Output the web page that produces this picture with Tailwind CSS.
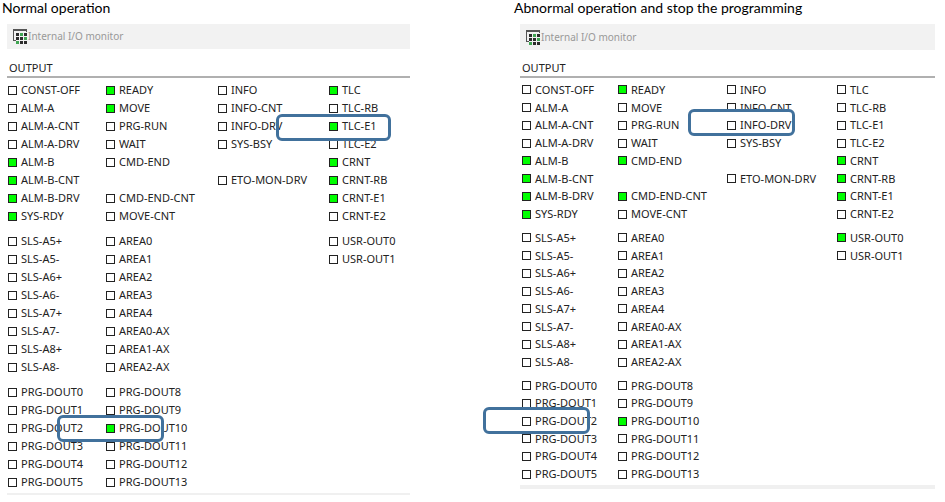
<!DOCTYPE html>
<html lang="en">
<head>
<meta charset="utf-8">
<title>Internal I/O monitor</title>
<script src="https://cdn.jsdelivr.net/npm/@tailwindcss/browser@4"></script>
</head>
<body class="bg-white font-['Noto_Sans',sans-serif] text-[11px] text-[#222]">
<svg class="hidden">
  <symbol id="io-icon" viewBox="0 0 15 15">
    <path d="M0 0H14V3H13V2H1V11H3V12H0z" fill="#555"/>
    <path d="M3 4h3v3H3zM11 4h3v3h-3zM7 8h3v3H7zM3 8h3v3H3zM7 12h3v3H7zM11 12h3v3h-3z" fill="#2c2c2c"/>
    <path d="M7 4h3v3H7zM11 8h3v3h-3zM3 12h3v3H3z" fill="#3fa552"/>
  </symbol>
</svg>
<main class="grid grid-cols-[408fr_421fr] gap-x-[104px] items-start pl-0.5 pr-2.5">
  <section>
    <h1 class="h-6 font-[Lato,sans-serif] text-sm leading-4 text-black whitespace-nowrap">Normal operation</h1>
    <div class="relative ml-[5px] border-b-2 border-[#f0f0f0]">
      <header class="flex h-[25px] items-center bg-[#f2f2f2] pl-1.5 text-[10px] text-[#999]">
        <svg class="h-[15px] w-[15px]" aria-hidden="true"><use href="#io-icon"/></svg><h2>Internal I/O monitor</h2>
      </header>
      <h3 class="mt-2.5 border-b-2 border-[#b0b0b0] pl-0.5 leading-[17px]">OUTPUT</h3>
      <div class="flex flex-col gap-[7px] pt-[3px] pb-0.5 pl-px" data-monitor="normal" data-rows="grid grid-cols-[98px_112px_111px_1fr] auto-rows-[18px]"></div>
      <div class="absolute left-[269px] top-[90px] h-[27px] w-[115px] rounded-md border-3 border-[#41719c]"></div>
      <div class="absolute left-[50px] top-[391px] h-[27px] w-[107px] rounded-md border-3 border-[#41719c]"></div>
    </div>
  </section>
  <section>
    <h1 class="h-6 font-[Lato,sans-serif] text-sm leading-4 text-black whitespace-nowrap">Abnormal operation and stop the programming</h1>
    <div class="relative ml-1.5 border-b-4 border-[#f0f0f0]">
      <header class="flex h-[26px] items-center bg-[#f2f2f2] pl-1.5 text-[10px] text-[#999]">
        <svg class="h-[15px] w-[15px]" aria-hidden="true"><use href="#io-icon"/></svg><h2>Internal I/O monitor</h2>
      </header>
      <h3 class="mt-[9px] border-b-2 border-[#b0b0b0] pl-0.5 leading-[17px]">OUTPUT</h3>
      <div class="flex flex-col gap-1.5 pt-[3px] pb-0.5 pl-0.5" data-monitor="abnormal" data-rows="grid grid-cols-[96px_109px_110px_1fr]"></div>
      <div class="absolute left-[168px] top-[85px] h-[27px] w-[107px] rounded-md border-3 border-[#41719c]"></div>
      <div class="absolute left-[-37px] top-[383px] h-[27px] w-[107px] rounded-md border-3 border-[#41719c]"></div>
    </div>
  </section>
</main>
<script>
  const groups = [
    [
      ['CONST-OFF', 'READY', 'INFO', 'TLC'],
      ['ALM-A', 'MOVE', 'INFO-CNT', 'TLC-RB'],
      ['ALM-A-CNT', 'PRG-RUN', 'INFO-DRV', 'TLC-E1'],
      ['ALM-A-DRV', 'WAIT', 'SYS-BSY', 'TLC-E2'],
      ['ALM-B', 'CMD-END', '', 'CRNT'],
      ['ALM-B-CNT', '', 'ETO-MON-DRV', 'CRNT-RB'],
      ['ALM-B-DRV', 'CMD-END-CNT', '', 'CRNT-E1'],
      ['SYS-RDY', 'MOVE-CNT', '', 'CRNT-E2'],
    ],
    [
      ['SLS-A5+', 'AREA0', '', 'USR-OUT0'],
      ['SLS-A5-', 'AREA1', '', 'USR-OUT1'],
      ['SLS-A6+', 'AREA2', '', ''],
      ['SLS-A6-', 'AREA3', '', ''],
      ['SLS-A7+', 'AREA4', '', ''],
      ['SLS-A7-', 'AREA0-AX', '', ''],
      ['SLS-A8+', 'AREA1-AX', '', ''],
      ['SLS-A8-', 'AREA2-AX', '', ''],
    ],
    [
      ['PRG-DOUT0', 'PRG-DOUT8', '', ''],
      ['PRG-DOUT1', 'PRG-DOUT9', '', ''],
      ['PRG-DOUT2', 'PRG-DOUT10', '', ''],
      ['PRG-DOUT3', 'PRG-DOUT11', '', ''],
      ['PRG-DOUT4', 'PRG-DOUT12', '', ''],
      ['PRG-DOUT5', 'PRG-DOUT13', '', ''],
    ],
  ];
  const common = ['READY', 'ALM-B', 'ALM-B-CNT', 'ALM-B-DRV', 'SYS-RDY', 'CRNT', 'CRNT-RB', 'CRNT-E1', 'PRG-DOUT10'];
  const active = {
    normal: [...common, 'MOVE', 'TLC', 'TLC-E1'],
    abnormal: [...common, 'CMD-END', 'CMD-END-CNT', 'USR-OUT0'],
  };
  // The second monitor is drawn slightly denser: row tracks share the group height.
  const heights = { normal: ['', '', ''], abnormal: ['h-[142px]', 'h-[142px]', 'h-[106px]'] };

  document.querySelectorAll('[data-monitor]').forEach((panel) => {
    const name = panel.dataset.monitor;
    groups.forEach((rows, index) => {
      const group = document.createElement('div');
      group.className = `${panel.dataset.rows} ${heights[name][index]}`;
      rows.flat().forEach((signal) => {
        if (!signal) {
          group.append(document.createElement('span'));
          return;
        }
        const label = document.createElement('label');
        label.className = 'flex min-h-0 items-center gap-1 whitespace-nowrap leading-4';
        const box = document.createElement('input');
        box.type = 'checkbox';
        box.className = 'h-[9px] w-[9px] shrink-0 appearance-none border border-[#222] bg-white checked:bg-[#00ff00]';
        box.checked = active[name].includes(signal);
        label.append(box, signal);
        group.append(label);
      });
      panel.append(group);
    });
  });
</script>
</body>
</html>
